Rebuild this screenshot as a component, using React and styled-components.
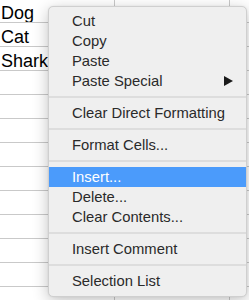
import React from "react";
import styled, { createGlobalStyle } from "styled-components";

const GlobalStyle = createGlobalStyle`
  html, body {
    margin: 0;
    padding: 0;
    background: #ffffff;
    overflow: hidden;
  }
`;

const Page = styled.div`
  position: relative;
  width: 249px;
  height: 300px;
  overflow: hidden;
  background: #ffffff;
`;

const Sheet = styled.div`
  display: flex;
  flex-direction: column;
`;

const Row = styled.div`
  display: grid;
  grid-template-columns: 115px 115px 1fr;
  height: 24px;
  box-sizing: border-box;
  border-bottom: 1px solid #c9c9c9;
  &:first-child {
    height: 23px;
  }
`;

const Cell = styled.div`
  display: flex;
  align-items: flex-end;
  padding-left: 1px;
  border-right: ${({ $last }) => ($last ? "none" : "1px solid #c9c9c9")};
  font-family: "Liberation Sans", Arial, sans-serif;
  font-size: 18px;
  line-height: 18px;
  color: #000;
  white-space: nowrap;
  overflow: hidden;
`;

const Menu = styled.div`
  position: absolute;
  left: 48px;
  top: 6px;
  width: 199px;
  box-sizing: border-box;
  padding: 4px 0 5px;
  background: #efefef;
  border: 1px solid #cfcfcf;
  border-radius: 5px;
  box-shadow: 0 4px 16px rgba(0, 0, 0, 0.24), 0 0 2px rgba(0, 0, 0, 0.08);
  display: flex;
  flex-direction: column;
`;

const Item = styled.div`
  height: 20px;
  display: flex;
  align-items: center;
  justify-content: space-between;
  padding: 0 13px 0 23px;
  font-family: "Liberation Sans", Arial, sans-serif;
  font-size: 14.8px;
  color: ${({ $active }) => ($active ? "#ffffff" : "#2a2a2a")};
  background: ${({ $active }) => ($active ? "#4b9bfb" : "transparent")};
  white-space: nowrap;
`;

const Arrow = styled.span`
  width: 0;
  height: 0;
  border-top: 5px solid transparent;
  border-bottom: 5px solid transparent;
  border-left: 9px solid #1a1a1a;
`;

const Separator = styled.div`
  height: 12px;
  display: flex;
  align-items: center;
  &::after {
    content: "";
    flex: 1;
    height: 2px;
    background: #dddddd;
  }
`;

const rows = [
  ["Dog", "Bird", ""],
  ["Cat", "", ""],
  ["Shark", "", ""],
  ["", "", ""],
  ["", "", ""],
  ["", "", ""],
  ["", "", ""],
  ["", "", ""],
  ["", "", ""],
  ["", "", ""],
  ["", "", ""],
  ["", "", ""],
  ["", "", ""],
];

const menu = [
  { label: "Cut" },
  { label: "Copy" },
  { label: "Paste" },
  { label: "Paste Special", sub: true },
  { sep: true },
  { label: "Clear Direct Formatting" },
  { sep: true },
  { label: "Format Cells..." },
  { sep: true },
  { label: "Insert...", active: true },
  { label: "Delete..." },
  { label: "Clear Contents..." },
  { sep: true },
  { label: "Insert Comment" },
  { sep: true },
  { label: "Selection List" },
];

export default function App() {
  return (
    <Page>
      <GlobalStyle />
      <Sheet>
        {rows.map((r, i) => (
          <Row key={i}>
            <Cell>{r[0]}</Cell>
            <Cell>{r[1]}</Cell>
            <Cell $last>{r[2]}</Cell>
          </Row>
        ))}
      </Sheet>
      <Menu>
        {menu.map((m, i) =>
          m.sep ? (
            <Separator key={i} />
          ) : (
            <Item key={i} $active={m.active}>
              <span>{m.label}</span>
              {m.sub && <Arrow />}
            </Item>
          )
        )}
      </Menu>
    </Page>
  );
}
